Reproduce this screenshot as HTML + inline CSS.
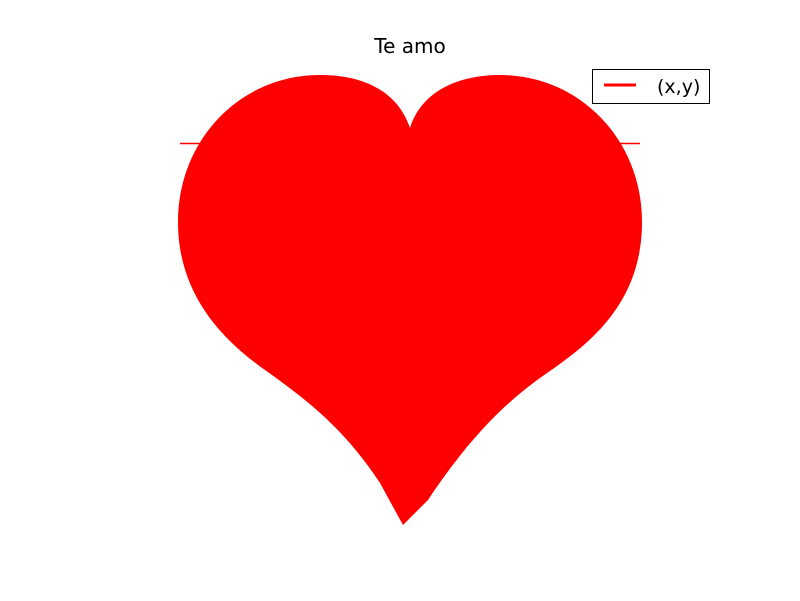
<!DOCTYPE html>
<html><head><style>
body{margin:0;background:#fff;width:800px;height:597px;overflow:hidden;font-family:"DejaVu Sans","Liberation Sans",sans-serif;}
</style></head><body>
<svg width="800" height="597" xmlns="http://www.w3.org/2000/svg">
<rect width="800" height="597" fill="#fff"/>
<line x1="180" y1="143.5" x2="640" y2="143.5" stroke="#f00" stroke-width="1.5"/>
<path d="M410,128 C397,90 362,75 320,75 C240,75 178,140 178,222 C178,300 230,345 265,370 C310,402 345,430 380,483 L403,525 L428,500 C460,452 495,410 540,378 C580,350 642,310 642,222 C642,140 580,75 500,75 C460,75 422,90 410,128 Z" fill="#f00"/>
<text x="410" y="53" font-size="20" text-anchor="middle" font-family="DejaVu Sans, Liberation Sans, sans-serif">Te amo</text>
<rect x="592.5" y="69.5" width="117" height="34" fill="#fff" stroke="#000" stroke-width="1"/>
<line x1="604" y1="85" x2="636" y2="85" stroke="#f00" stroke-width="3"/>
<text x="657" y="93" font-size="19" font-family="DejaVu Sans, Liberation Sans, sans-serif">(x,y)</text>
</svg>
</body></html>
